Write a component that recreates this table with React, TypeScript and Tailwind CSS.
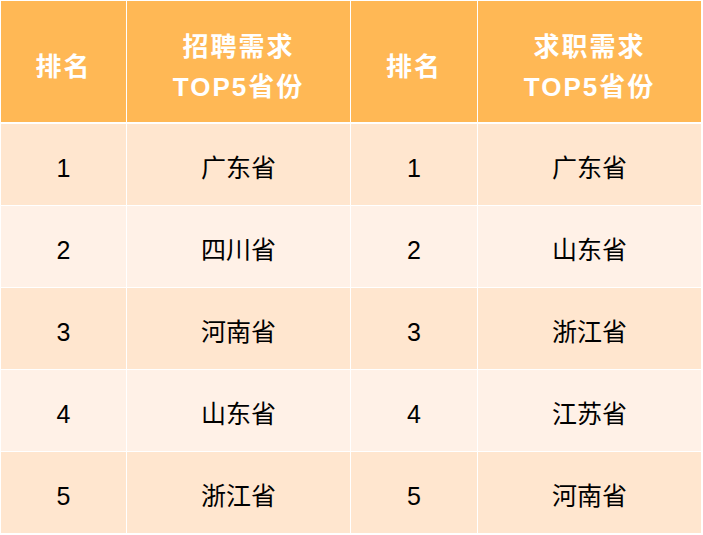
const rows = [
  ["1", "广东省", "1", "广东省"],
  ["2", "四川省", "2", "山东省"],
  ["3", "河南省", "3", "浙江省"],
  ["4", "山东省", "4", "江苏省"],
  ["5", "浙江省", "5", "河南省"],
];

const font = { fontFamily: '"Liberation Sans", "Noto Sans CJK SC", sans-serif' };

export default function App() {
  return (
    <div className="h-[535px] w-[703px] bg-white pl-px pt-px" style={font}>
      <div className="grid w-[701px] grid-cols-[125px_223px_126px_223px] gap-x-px">
        <div className="flex h-[121px] items-center justify-center bg-[#ffb855] pt-[12px] text-[26px] font-bold tracking-[2px] text-white">
          排名
        </div>
        <div className="flex h-[121px] flex-col items-center justify-center bg-[#ffb855] pt-[10px] text-[26px] font-bold leading-[40px] tracking-[2px] text-white">
          <span>招聘需求</span>
          <span>TOP5省份</span>
        </div>
        <div className="flex h-[121px] items-center justify-center bg-[#ffb855] pt-[12px] text-[26px] font-bold tracking-[2px] text-white">
          排名
        </div>
        <div className="flex h-[121px] flex-col items-center justify-center bg-[#ffb855] pt-[10px] text-[26px] font-bold leading-[40px] tracking-[2px] text-white">
          <span>求职需求</span>
          <span>TOP5省份</span>
        </div>
      </div>
      <div className="mt-[2px] grid w-[701px] grid-cols-[125px_223px_126px_223px] gap-px">
        {rows.map((row, i) =>
          row.map((cell, j) => (
            <div
              key={`${i}-${j}`}
              className={`flex h-[81px] items-center justify-center pt-[9px] text-[25px] text-black ${
                i % 2 === 0 ? "bg-[#ffe6cf]" : "bg-[#fff1e7]"
              }`}
            >
              {cell}
            </div>
          ))
        )}
      </div>
    </div>
  );
}
